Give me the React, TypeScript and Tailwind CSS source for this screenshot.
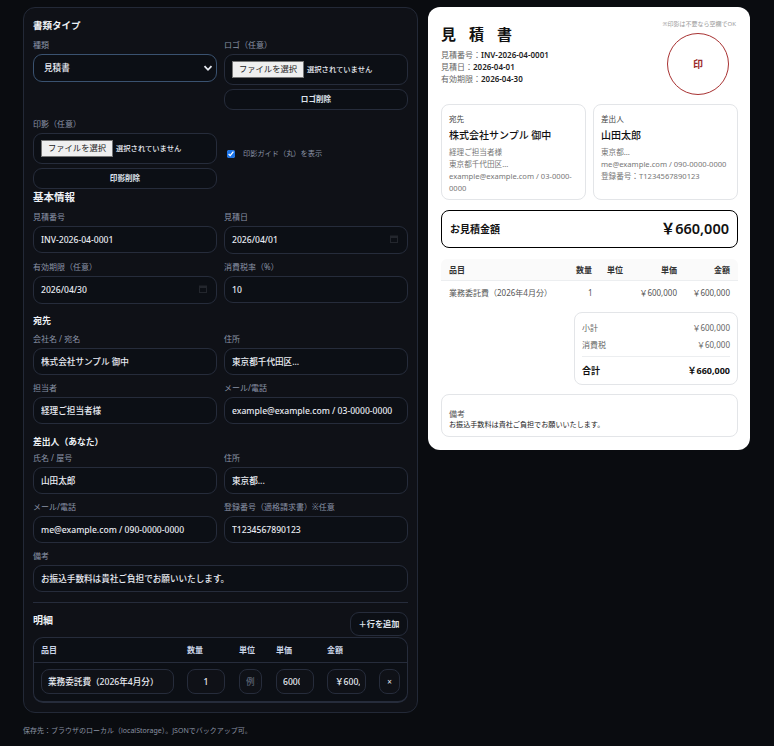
import type { ReactNode } from 'react';

const FONT = "font-['Noto_Sans','Noto_Sans_CJK_JP',sans-serif]";
const CONTROL = 'block h-[27px] w-full rounded-[9px] border border-[#262c3b] bg-[#0c0f15] px-[7px] text-[8.6px] font-medium text-[#e8ebf2] outline-none';
const CELL = 'h-[25px] rounded-[8px] border border-[#262c3b] bg-[#0f1117] text-[8.6px] font-medium text-[#e8ebf2] outline-none';

function SectionTitle({ children, className = '' }: { children: ReactNode; className?: string }) {
  return <div className={`h-[14px] font-bold leading-[14px] text-[#eef1f6] ${className}`}>{children}</div>;
}

function Label({ children }: { children?: ReactNode }) {
  return <div className="mb-[3px] h-[12px] text-[8px] leading-[12px] text-[#8a93a6]">{children}</div>;
}

function TextField({ label, value }: { label: string; value: string }) {
  return (
    <div>
      <Label>{label}</Label>
      <input className={CONTROL} defaultValue={value} />
    </div>
  );
}

function DateField({ label, value }: { label: string; value: string }) {
  return (
    <div>
      <Label>{label}</Label>
      <div className="flex h-[28px] items-center justify-between rounded-[9px] border border-[#262c3b] bg-[#0c0f15] pl-[7px] pr-[9px] text-[8.6px] font-medium text-[#e8ebf2]">
        <span className="pt-[1px]">{value}</span>
        <svg width="8" height="8" viewBox="0 0 8 8" fill="none" className="mb-[2px] text-[#23262d]">
          <rect x="0.5" y="1" width="7" height="6.5" stroke="currentColor" />
          <rect x="0" y="1" width="8" height="2" fill="currentColor" />
        </svg>
      </div>
    </div>
  );
}

function FilePicker() {
  return (
    <div className="flex h-[31px] items-center rounded-[9px] border border-[#262c3b] bg-[#0c0f15] pl-[7px]">
      <span className="flex h-[17px] w-[72px] items-center justify-center border border-[#767676] bg-[#efefef] text-[8.3px] text-[#222]">
        ファイルを選択
      </span>
      <span className="ml-[3px] text-[7.3px] font-medium text-[#e8ebf2]">選択されていません</span>
    </div>
  );
}

function GhostButton({ children }: { children: ReactNode }) {
  return (
    <button className="mt-[4px] flex h-[21px] w-full items-center justify-center rounded-[9px] border border-[#262c3b] bg-[#0c0f15] text-[7.6px] font-bold text-[#dfe3ec]">
      {children}
    </button>
  );
}

function PreviewParty({ heading, name, lines }: { heading: string; name: string; lines: string[] }) {
  return (
    <div className="h-[96px] rounded-[8px] border border-[#e3e5e8] px-[7px] pt-[8px]">
      <div className="h-[12px] text-[7.6px] leading-[12px] text-[#444]">{heading}</div>
      <div className="mt-[2px] h-[16px] text-[10px] font-medium leading-[16px] text-[#111]">{name}</div>
      <div className="mt-[3px] text-[7.6px] leading-[12px] text-[#777]">
        {lines.map((line) => (
          <div key={line}>{line}</div>
        ))}
      </div>
    </div>
  );
}

function EditorPanel() {
  return (
    <div className="h-[706px] w-[395px] shrink-0 rounded-[12px] border border-[#232937] bg-[#0f1117] px-[9px] pt-[11px]">
      <SectionTitle className="text-[9.5px]">書類タイプ</SectionTitle>
      <div className="mt-[6px] grid grid-cols-2 gap-x-[7px] gap-y-[8px]">
        <div>
          <Label>種類</Label>
          <div className="flex h-[28px] items-center justify-between rounded-[9px] border border-[#3a5270] bg-[#0c0f15] pl-[10px] pr-[3px] text-[8.6px] font-medium text-[#e8ebf2]">
            <span>見積書</span>
            <svg width="10" height="10" viewBox="0 0 10 10" fill="none" stroke="#e8ebf2" strokeWidth="1.8">
              <path d="M1.5 3.2 5 6.8 8.5 3.2" />
            </svg>
          </div>
        </div>
        <div>
          <Label>ロゴ（任意）</Label>
          <FilePicker />
          <GhostButton>ロゴ削除</GhostButton>
        </div>
        <div>
          <Label>印影（任意）</Label>
          <FilePicker />
          <GhostButton>印影削除</GhostButton>
        </div>
        <label className="flex items-center gap-[8px] pl-[3px] text-[7.2px] text-[#8a93a6]">
          <input type="checkbox" defaultChecked className="h-[8px] w-[8px] accent-[#1a73e8]" />
          印影ガイド（丸）を表示
        </label>
      </div>

      <SectionTitle className="mt-[1px] text-[10.5px]">基本情報</SectionTitle>
      <div className="mt-[7px] grid grid-cols-2 gap-x-[7px] gap-y-[7px]">
        <TextField label="見積番号" value="INV-2026-04-0001" />
        <DateField label="見積日" value="2026/04/01" />
        <DateField label="有効期限（任意）" value="2026/04/30" />
        <TextField label="消費税率（%）" value="10" />
      </div>

      <SectionTitle className="mt-[10px] text-[9px]">宛先</SectionTitle>
      <div className="mt-[5px] grid grid-cols-2 gap-x-[7px] gap-y-[7px]">
        <TextField label="会社名 / 宛名" value="株式会社サンプル 御中" />
        <TextField label="住所" value="東京都千代田区..." />
        <TextField label="担当者" value="経理ご担当者様" />
        <TextField label="メール/電話" value="example@example.com / 03-0000-0000" />
      </div>

      <SectionTitle className="mt-[11px] text-[8.8px]">差出人（あなた）</SectionTitle>
      <div className="mt-[3px] grid grid-cols-2 gap-x-[7px] gap-y-[7px]">
        <TextField label="氏名 / 屋号" value="山田太郎" />
        <TextField label="住所" value="東京都..." />
        <TextField label="メール/電話" value="me@example.com / 090-0000-0000" />
        <TextField label="登録番号（適格請求書）※任意" value="T1234567890123" />
        <div className="col-span-2">
          <TextField label="備考" value="お振込手数料は貴社ご負担でお願いいたします。" />
        </div>
      </div>

      <div className="mt-[10px] border-t border-[#262c3b]" />

      <div className="mt-[9px] flex h-[24px] justify-between">
        <span className="pt-[1px] text-[10px] font-bold text-[#eef1f6]">明細</span>
        <button className="h-[24px] w-[58px] rounded-[9px] border border-[#262c3b] bg-[#0c0f15] text-[8.2px] font-bold text-[#dfe3ec]">
          ＋行を追加
        </button>
      </div>

      <div className="mt-[1px] h-[66px] rounded-[10px] border border-b-2 border-[#262c3b] bg-[#0c0f15]">
        <div className="grid h-[25px] grid-cols-[146px_52px_37px_51px_52px_21px] items-center border-b border-[#262c3b] pl-[7px] text-[8px] font-bold text-[#c9d3e6]">
          <span>品目</span>
          <span>数量</span>
          <span>単位</span>
          <span>単価</span>
          <span>金額</span>
          <span />
        </div>
        <div className="grid grid-cols-[146px_52px_37px_51px_52px_21px] items-center pl-[7px] pt-[6px]">
          <input className={`${CELL} w-[133px] px-[6px]`} defaultValue="業務委託費（2026年4月分）" />
          <input className={`${CELL} w-[38px] text-center`} defaultValue="1" />
          <input className={`${CELL} w-[23px] pl-[6px] pr-[3px] placeholder:text-[#5c6373]`} placeholder="例：式" />
          <input className={`${CELL} w-[38px] pl-[6px] pr-[13px]`} defaultValue="600000" />
          <input className={`${CELL} w-[39px] pl-[7px] pr-[5px]`} defaultValue="￥600,000" />
          <button className="h-[25px] w-[21px] rounded-[8px] border border-[#262c3b] bg-[#0f1117] text-[8px] text-[#e8ebf2]">×</button>
        </div>
      </div>
    </div>
  );
}

function PreviewPanel() {
  return (
    <div className="h-[443px] w-[322px] shrink-0 rounded-[12px] bg-white pl-[13px] pr-[12px] pt-[13px]">
      <div className="flex h-[84px] justify-between">
        <div>
          <div className="mt-[4px] h-[20px] text-[15px] font-bold leading-[20px] tracking-[13px] text-[#111]">見積書</div>
          <div className="mt-[5px] text-[8px] leading-[12px] text-[#666]">
            <div>見積番号：<span className="font-semibold text-[#222]">INV-2026-04-0001</span></div>
            <div>見積日：<span className="font-semibold text-[#222]">2026-04-01</span></div>
            <div>有効期限：<span className="font-semibold text-[#222]">2026-04-30</span></div>
          </div>
        </div>
        <div className="flex w-[80px] flex-col items-end">
          <div className="mr-[2px] whitespace-nowrap text-[6px] leading-[9px] text-[#999]">※印影は不要なら空欄でOK</div>
          <div className="mr-[9px] mt-[4px] flex h-[62px] w-[62px] items-center justify-center rounded-full border border-[#a83232] text-[10px] font-semibold text-[#9b2c2c]">
            印
          </div>
        </div>
      </div>

      <div className="grid grid-cols-2 gap-x-[7px]">
        <PreviewParty
          heading="宛先"
          name="株式会社サンプル 御中"
          lines={['経理ご担当者様', '東京都千代田区...', 'example@example.com / 03-0000-', '0000']}
        />
        <PreviewParty
          heading="差出人"
          name="山田太郎"
          lines={['東京都...', 'me@example.com / 090-0000-0000', '登録番号：T1234567890123']}
        />
      </div>

      <div className="mt-[10px] flex h-[38px] items-center justify-between rounded-[8px] border border-black px-[8px]">
        <span className="text-[10px] font-semibold text-[#111]">お見積金額</span>
        <span className="text-[14.5px] font-semibold text-[#111]">￥660,000</span>
      </div>

      <div className="mt-[11px] grid h-[22px] grid-cols-[127px_31px_30px_40px_53px] items-center rounded-t-[6px] border-b border-[#eceef0] bg-[#fafafa] px-[8px] text-[8px] font-semibold text-[#333]">
        <span>品目</span>
        <span>数量</span>
        <span>単位</span>
        <span className="text-right">単価</span>
        <span className="text-right">金額</span>
      </div>
      <div className="grid h-[24px] grid-cols-[127px_31px_30px_40px_53px] items-center px-[8px] text-[8px] text-[#555]">
        <span className="whitespace-nowrap">業務委託費（2026年4月分）</span>
        <span className="pl-[12px]">1</span>
        <span />
        <span className="text-right">￥600,000</span>
        <span className="text-right">￥600,000</span>
      </div>

      <div className="ml-[133px] mt-[7px] h-[73px] rounded-[8px] border border-[#e3e5e8] px-[7px] pt-[7px] text-[8px] text-[#666]">
        <div className="flex h-[16px] items-center justify-between">
          <span>小計</span>
          <span>￥600,000</span>
        </div>
        <div className="mt-[1px] flex h-[16px] items-center justify-between">
          <span>消費税</span>
          <span>￥60,000</span>
        </div>
        <div className="mt-[3px] border-t border-[#eceef0]" />
        <div className="mt-[5px] flex h-[18px] items-center justify-between font-bold text-[#111]">
          <span className="text-[9px]">合計</span>
          <span className="text-[9px]">￥660,000</span>
        </div>
      </div>

      <div className="mt-[9px] h-[43px] rounded-[8px] border border-[#e3e5e8] px-[7px] pt-[13px]">
        <div className="h-[11px] text-[8px] leading-[11px] text-[#555]">備考</div>
        <div className="text-[7.1px] leading-[11px] text-[#222]">お振込手数料は貴社ご負担でお願いいたします。</div>
      </div>
    </div>
  );
}

export default function App() {
  return (
    <div className={`min-h-screen overflow-hidden bg-[#0a0c10] pl-[23px] pt-[7px] ${FONT}`} lang="ja">
      <div className="flex items-start gap-[10px]">
        <EditorPanel />
        <PreviewPanel />
      </div>
      <div className="mt-[12px] text-[7px] leading-[12px] text-[#8b93a3]">
        保存先：ブラウザのローカル（localStorage）。JSONでバックアップ可。
      </div>
    </div>
  );
}
